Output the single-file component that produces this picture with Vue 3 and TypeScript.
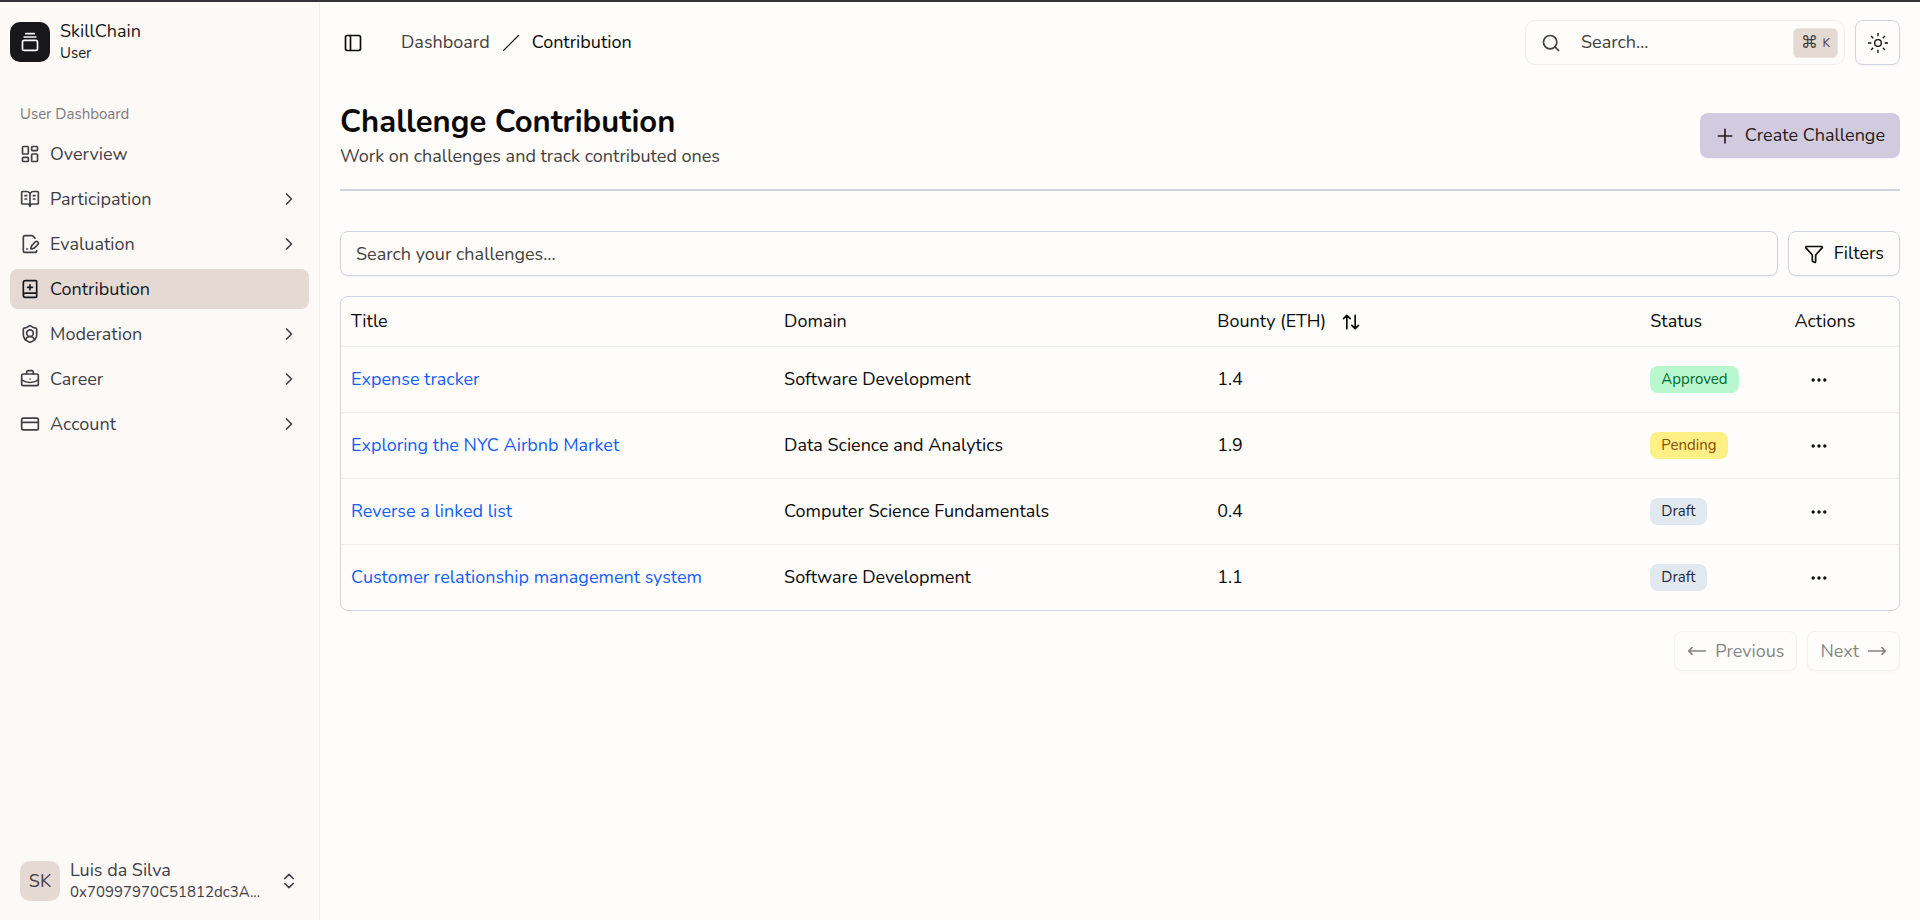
<script setup lang="ts">
import { ref } from 'vue'

interface NavItem {
  label: string
  icon: string
  expandable: boolean
  active?: boolean
}

interface Challenge {
  title: string
  domain: string
  bounty: string
  status: 'Approved' | 'Pending' | 'Draft'
}

const icons: Record<string, string> = {
  overview:
    '<rect width="7" height="9" x="3" y="3" rx="1"/><rect width="7" height="5" x="14" y="3" rx="1"/><rect width="7" height="9" x="14" y="12" rx="1"/><rect width="7" height="5" x="3" y="16" rx="1"/>',
  participation:
    '<path d="M12 7v14M16 12h2M16 8h2M3 18a1 1 0 0 1-1-1V4a1 1 0 0 1 1-1h5a4 4 0 0 1 4 4 4 4 0 0 1 4-4h5a1 1 0 0 1 1 1v13a1 1 0 0 1-1 1h-6a3 3 0 0 0-3 3 3 3 0 0 0-3-3zM6 12h2M6 8h2"/>',
  evaluation:
    '<path d="m18 5-2.414-2.414A2 2 0 0 0 14.172 2H6a2 2 0 0 0-2 2v16a2 2 0 0 0 2 2h12a2 2 0 0 0 2-2"/><path d="M21.378 12.626a1 1 0 0 0-3.004-3.004l-4.01 4.012a2 2 0 0 0-.506.854l-.837 2.87a.5.5 0 0 0 .62.62l2.87-.837a2 2 0 0 0 .854-.506z"/><path d="M8 18h1"/>',
  contribution:
    '<path d="M12 7v6M9 10h6M4 19.5v-15A2.5 2.5 0 0 1 6.5 2H19a1 1 0 0 1 1 1v18a1 1 0 0 1-1 1H6.5a1 1 0 0 1 0-5H20"/>',
  moderation:
    '<path d="M20 13c0 5-3.5 7.5-7.66 8.95a1 1 0 0 1-.67-.01C7.5 20.5 4 18 4 13V6a1 1 0 0 1 1-1c2 0 4.5-1.2 6.24-2.72a1.17 1.17 0 0 1 1.52 0C14.51 3.81 17 5 19 5a1 1 0 0 1 1 1z"/><path d="M6.376 18.91a6 6 0 0 1 11.249.003"/><circle cx="12" cy="11" r="4"/>',
  career:
    '<path d="M12 12h.01M16 6V4a2 2 0 0 0-2-2h-4a2 2 0 0 0-2 2v2M22 13a18.15 18.15 0 0 1-20 0"/><rect width="20" height="14" x="2" y="6" rx="2"/>',
  account: '<rect width="20" height="14" x="2" y="5" rx="2"/><path d="M2 10h20"/>',
}

const nav: NavItem[] = [
  { label: 'Overview', icon: 'overview', expandable: false },
  { label: 'Participation', icon: 'participation', expandable: true },
  { label: 'Evaluation', icon: 'evaluation', expandable: true },
  { label: 'Contribution', icon: 'contribution', expandable: false, active: true },
  { label: 'Moderation', icon: 'moderation', expandable: true },
  { label: 'Career', icon: 'career', expandable: true },
  { label: 'Account', icon: 'account', expandable: true },
]

const challenges: Challenge[] = [
  { title: 'Expense tracker', domain: 'Software Development', bounty: '1.4', status: 'Approved' },
  { title: 'Exploring the NYC Airbnb Market', domain: 'Data Science and Analytics', bounty: '1.9', status: 'Pending' },
  { title: 'Reverse a linked list', domain: 'Computer Science Fundamentals', bounty: '0.4', status: 'Draft' },
  { title: 'Customer relationship management system', domain: 'Software Development', bounty: '1.1', status: 'Draft' },
]

const globalQuery = ref('')
const challengeQuery = ref('')
</script>

<template>
  <div class="app">
    <aside class="sidebar">
      <div class="brand">
        <span class="brand-logo">
          <svg class="icon" viewBox="0 0 24 24"><path d="M7 2h10M5 6h14" /><rect width="18" height="12" x="3" y="10" rx="2" /></svg>
        </span>
        <span class="two-lines">
          <span class="line-main">SkillChain</span>
          <span class="line-sub">User</span>
        </span>
      </div>

      <nav class="nav" aria-label="User Dashboard">
        <p class="nav-heading">User Dashboard</p>
        <ul class="nav-list">
          <li v-for="item in nav" :key="item.label">
            <component
              :is="item.expandable ? 'button' : 'a'"
              class="nav-item"
              :class="{ active: item.active }"
              :href="item.expandable ? undefined : '#'"
              :type="item.expandable ? 'button' : undefined"
              :aria-current="item.active ? 'page' : undefined"
            >
              <svg class="icon" viewBox="0 0 24 24" v-html="icons[item.icon]"></svg>
              <span class="nav-label">{{ item.label }}</span>
              <svg v-if="item.expandable" class="icon" viewBox="0 0 24 24"><path d="m9 18 6-6-6-6" /></svg>
            </component>
          </li>
        </ul>
      </nav>

      <button class="account" type="button">
        <span class="avatar">SK</span>
        <span class="two-lines account-text">
          <span class="line-main">Luis da Silva</span>
          <span class="line-sub">0x70997970C51812dc3A...</span>
        </span>
        <svg class="icon" viewBox="0 0 24 24"><path d="m7 15 5 5 5-5M7 9l5-5 5 5" /></svg>
      </button>
    </aside>

    <main class="main">
      <header class="topbar">
        <button class="toggle" type="button" aria-label="Toggle sidebar">
          <svg class="icon" viewBox="0 0 24 24"><rect width="18" height="18" x="3" y="3" rx="2" /><path d="M9 3v18" /></svg>
        </button>
        <nav class="crumbs" aria-label="Breadcrumb">
          <a class="crumb" href="#">Dashboard</a>
          <svg class="icon slash" viewBox="0 0 24 24"><path d="M22 2 2 22" /></svg>
          <span class="crumb-current" aria-current="page">Contribution</span>
        </nav>
        <label class="global-search">
          <svg class="icon" viewBox="0 0 24 24"><circle cx="11" cy="11" r="8" /><path d="m21 21-4.3-4.3" /></svg>
          <input v-model="globalQuery" type="text" placeholder="Search..." aria-label="Search" />
          <kbd class="shortcut"><span class="cmd">⌘</span>K</kbd>
        </label>
        <button class="box square" type="button" aria-label="Toggle theme">
          <svg class="icon sun" viewBox="0 0 15 15">
            <circle cx="7.5" cy="7.5" r="2.5" />
            <path d="M7.5 0v2.5M7.5 12.5V15M0 7.5h2.5M12.5 7.5H15M2.3 2.3l1.6 1.6M11.1 11.1l1.6 1.6M2.3 12.7l1.6-1.6M11.1 3.9l1.6-1.6" />
          </svg>
        </button>
      </header>

      <section class="heading">
        <div>
          <h1>Challenge Contribution</h1>
          <p>Work on challenges and track contributed ones</p>
        </div>
        <button class="box primary" type="button">
          <svg class="icon" viewBox="0 0 24 24"><path d="M4 12h16M12 4v16" /></svg>
          Create Challenge
        </button>
      </section>

      <section class="filters">
        <input v-model="challengeQuery" class="box search" type="text" placeholder="Search your challenges..." aria-label="Search your challenges" />
        <button class="box" type="button">
          <svg class="icon" viewBox="0 0 24 24">
            <path d="M10 20a1 1 0 0 0 .553.895l2 1A1 1 0 0 0 14 21v-7a2 2 0 0 1 .517-1.341L21.74 4.67A1 1 0 0 0 21 3H3a1 1 0 0 0-.742 1.67l7.225 7.989A2 2 0 0 1 10 14z" />
          </svg>
          Filters
        </button>
      </section>

      <div class="table-card">
        <table>
          <colgroup>
            <col class="wide" />
            <col class="wide" />
            <col class="wide" />
            <col class="narrow" />
            <col />
          </colgroup>
          <thead>
            <tr>
              <th scope="col">Title</th>
              <th scope="col">Domain</th>
              <th scope="col">
                <button class="sort" type="button">
                  Bounty (ETH)
                  <svg class="icon" viewBox="0 0 24 24"><path d="m21 16-4 4-4-4M17 20V4M3 8l4-4 4 4M7 4v16" /></svg>
                </button>
              </th>
              <th scope="col">Status</th>
              <th scope="col">Actions</th>
            </tr>
          </thead>
          <tbody>
            <tr v-for="row in challenges" :key="row.title">
              <td><a class="link" href="#">{{ row.title }}</a></td>
              <td>{{ row.domain }}</td>
              <td>{{ row.bounty }}</td>
              <td><span class="badge" :class="row.status.toLowerCase()">{{ row.status }}</span></td>
              <td>
                <button class="more" type="button" :aria-label="`Actions for ${row.title}`">
                  <svg class="icon" viewBox="0 0 24 24"><circle cx="12" cy="12" r="1" /><circle cx="19" cy="12" r="1" /><circle cx="5" cy="12" r="1" /></svg>
                </button>
              </td>
            </tr>
          </tbody>
        </table>
      </div>

      <nav class="pager" aria-label="Pagination">
        <button class="box page-btn" type="button" disabled>
          <svg class="icon" viewBox="0 0 24 24"><path d="M6 8l-4 4 4 4M2 12h20" /></svg>
          Previous
        </button>
        <button class="box page-btn" type="button" disabled>
          Next
          <svg class="icon" viewBox="0 0 24 24"><path d="M18 8l4 4-4 4M2 12h20" /></svg>
        </button>
      </nav>
    </main>
  </div>
</template>

<style>
body {
  background: #fefdfb;
}
</style>

<style scoped>
* {
  box-sizing: border-box;
}

.app {
  display: flex;
  min-height: 100vh;
  border-top: 2px solid #353336;
  font-family: Nunito, 'Nunito Sans', Lato, sans-serif;
  font-size: 18px;
  line-height: 25px;
  color: #0c0a09;
}

button,
input {
  font: inherit;
  color: inherit;
}

button {
  margin: 0;
  padding: 0;
  border: 0;
  background: none;
}

a {
  color: inherit;
  text-decoration: none;
}

.icon {
  display: block;
  flex: none;
  width: 20px;
  height: 20px;
  fill: none;
  stroke: currentColor;
  stroke-width: 2;
  stroke-linecap: round;
  stroke-linejoin: round;
}

.icon.slash {
  width: 18px;
  height: 18px;
  stroke-width: 1.5;
}

/* Sidebar */
.sidebar {
  display: flex;
  flex-direction: column;
  flex: none;
  width: 320px;
  padding: 20px 10px 9px;
  border-right: 1px solid #f1eeec;
  background: #fdf9f6;
  color: #3f3f46;
}

.brand {
  display: flex;
  align-items: center;
  gap: 10px;
  height: 40px;
  color: #18181b;
}

.brand-logo,
.avatar {
  display: flex;
  align-items: center;
  justify-content: center;
  flex: none;
  width: 40px;
  height: 40px;
  border-radius: 10px;
}

.brand-logo {
  background: #18181b;
  color: #fafafa;
}

.avatar {
  background: #e4d9d3;
}

.two-lines {
  display: flex;
  flex-direction: column;
  text-align: left;
}

.line-main {
  line-height: 23px;
}

.line-sub {
  font-size: 15px;
  line-height: 21px;
}

.nav {
  flex: 1;
  margin-top: 32px;
}

.nav-heading {
  margin: 0;
  padding: 0 10px;
  font-size: 15px;
  line-height: 40px;
  color: #7b7a80;
}

.nav-list {
  display: flex;
  flex-direction: column;
  gap: 5px;
  margin: 0;
  padding: 0;
  list-style: none;
}

.nav-item {
  display: flex;
  align-items: center;
  gap: 10px;
  width: 100%;
  height: 40px;
  padding: 0 10px;
  border-radius: 8px;
  text-align: left;
}

.nav-item.active {
  background: #e4d9d3;
  color: #18181b;
}

.nav-label {
  flex: 1;
}

.account {
  display: flex;
  align-items: center;
  gap: 10px;
  width: 100%;
  padding: 8px 10px;
}

.account-text {
  flex: 1;
}

/* Main column */
.main {
  flex: 1;
  min-width: 0;
  padding: 18px 20px 20px;
}

.box {
  display: flex;
  align-items: center;
  justify-content: center;
  gap: 10px;
  height: 45px;
  padding: 0 15px;
  border: 1px solid #d0d4e0;
  border-radius: 8px;
  background: #fefdfb;
  box-shadow: 0 1px 2px rgba(0, 0, 0, 0.05);
  white-space: nowrap;
}

.box.square {
  width: 45px;
  padding: 0;
}

.sun {
  stroke-width: 1;
  stroke-linecap: butt;
}

.topbar {
  display: flex;
  align-items: center;
  height: 45px;
}

.toggle {
  margin-left: 3px;
}

.crumbs {
  display: flex;
  align-items: center;
  gap: 12px;
  margin-left: 38px;
}

.crumb {
  color: #44403c;
}

.global-search {
  display: flex;
  align-items: center;
  gap: 20px;
  width: 320px;
  height: 45px;
  margin: 0 10px 0 auto;
  padding: 0 6px 0 15px;
  border: 1px solid #f1efee;
  border-radius: 10px;
  color: #44403c;
}

.global-search input {
  flex: 1;
  min-width: 0;
  padding: 0;
  border: 0;
  outline: 0;
  background: none;
}

input::placeholder {
  color: #44403c;
  opacity: 1;
}

.shortcut {
  display: flex;
  align-items: center;
  gap: 4px;
  height: 30px;
  padding: 0 7px;
  border: 1px solid #eee6e1;
  border-radius: 5px;
  background: #e4d9d3;
  font-family: inherit;
  font-size: 12px;
  line-height: 20px;
}

.cmd {
  font-size: 17px;
}

.heading {
  display: flex;
  align-items: center;
  justify-content: space-between;
  margin-top: 36px;
  padding-bottom: 19px;
  border-bottom: 2px solid #d0d4e0;
}

h1 {
  margin: 0;
  font-size: 31px;
  font-weight: 700;
  line-height: 42px;
}

.heading p {
  margin: 0;
  line-height: 27px;
  color: #44403c;
}

.box.primary {
  border: 0;
  background: #d0cbdf;
  color: #2b1a1a;
}

.filters {
  display: flex;
  gap: 10px;
  margin-top: 40px;
}

.box.search {
  flex: 1;
  min-width: 0;
}

/* Table */
.table-card {
  margin-top: 20px;
  border: 1px solid #d0d4e0;
  border-radius: 8px;
}

table {
  width: 100%;
  border-collapse: separate;
  border-spacing: 0;
  table-layout: fixed;
}

.wide {
  width: 27.8%;
}

.narrow {
  width: 9.25%;
}

th,
td {
  padding: 0 10px;
  text-align: left;
  font-weight: 400;
}

th {
  height: 49px;
}

td {
  height: 66px;
  border-top: 1px solid #f1efee;
}

.sort {
  display: flex;
  align-items: center;
  gap: 15px;
}

.link {
  color: #155dfc;
}

.badge {
  display: inline-block;
  padding: 0 11px;
  border-radius: 8px;
  font-size: 15px;
  line-height: 27px;
}

.approved {
  background: #b9f8cf;
  color: #016630;
}

.pending {
  background: #fff085;
  color: #894b00;
}

.draft {
  background: #e2e8f0;
  color: #1d293d;
}

.more {
  display: block;
  padding: 10px 15px;
}

.pager {
  display: flex;
  justify-content: flex-end;
  gap: 10px;
  margin-top: 20px;
}

.page-btn {
  gap: 8px;
  height: 40px;
  padding: 0 12px;
  opacity: 0.5;
  border-color: #eceae8;
}
</style>
